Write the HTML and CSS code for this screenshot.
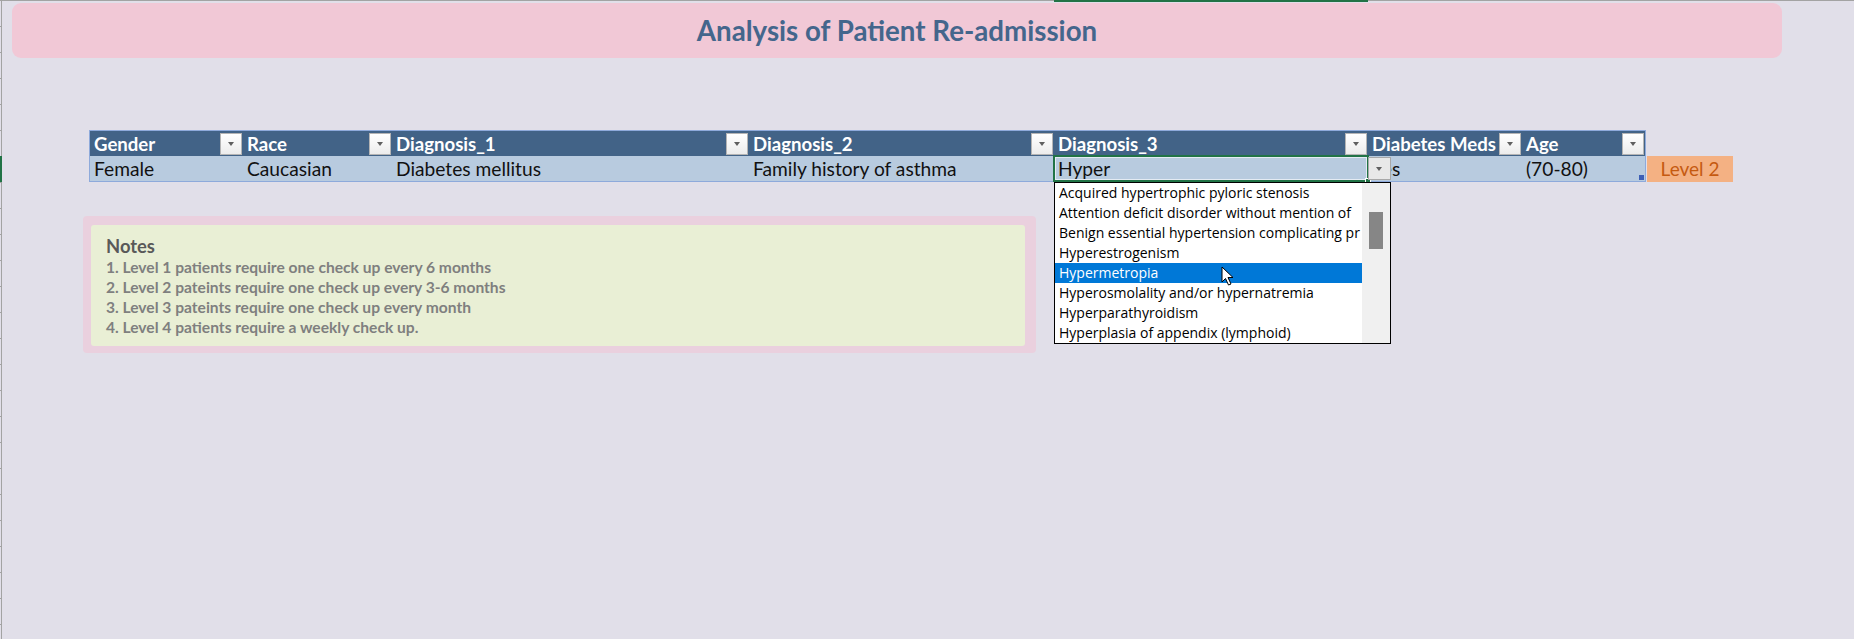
FILE: index.html
```html
<!DOCTYPE html>
<html>
<head>
<meta charset="utf-8">
<link rel="stylesheet" href="styles.css">
</head>
<body>
<div class="sheet">
  <div class="gutter"><span class="row-mark"></span></div>
  <span class="col-mark"></span>
  <div class="main">
    <header class="banner"><h1 class="title">Analysis of Patient Re-admission</h1></header>

    <div class="table-line">
      <div class="tbl">
        <div class="thead">
          <div class="th"><span>Gender</span><i class="fbtn"></i></div>
          <div class="th"><span>Race</span><i class="fbtn"></i></div>
          <div class="th"><span>Diagnosis_1</span><i class="fbtn"></i></div>
          <div class="th"><span>Diagnosis_2</span><i class="fbtn"></i></div>
          <div class="th"><span>Diagnosis_3</span><i class="fbtn"></i></div>
          <div class="th"><span>Diabetes Meds</span><i class="fbtn"></i></div>
          <div class="th"><span>Age</span><i class="fbtn"></i></div>
        </div>
        <div class="trow">
          <div class="td">Female</div>
          <div class="td">Caucasian</div>
          <div class="td">Diabetes mellitus</div>
          <div class="td">Family history of asthma</div>
          <div class="td active">Hyper
            <span class="fill-handle"></span>
            <i class="dv-btn"></i>
            <div class="dropdown">
              <ul class="options">
                <li>Acquired hypertrophic pyloric stenosis</li>
                <li>Attention deficit disorder without mention of</li>
                <li>Benign essential hypertension complicating pr</li>
                <li>Hyperestrogenism</li>
                <li class="selected">Hypermetropia</li>
                <li>Hyperosmolality and/or hypernatremia</li>
                <li>Hyperparathyroidism</li>
                <li>Hyperplasia of appendix (lymphoid)</li>
              </ul>
              <div class="scrollbar"><span class="thumb"></span></div>
              <svg class="cursor" width="14" height="21" viewBox="0 0 14 21"><path d="M1 1 L1 16 L4.5 12.5 L7.5 19 L10 18 L7 11.5 L12 11.5 Z" fill="#fff" stroke="#000" stroke-width="1" stroke-linejoin="miter"/></svg>
            </div>
          </div>
          <div class="td">Yes</div>
          <div class="td last">(70-80)<span class="resize"></span></div>
        </div>
      </div>
      <div class="level">Level 2</div>
    </div>

    <section class="notes">
      <div class="notes-inner">
        <h2 class="notes-title">Notes</h2>
        <p>1. Level 1 patients require one check up every 6 months</p>
        <p>2. Level 2 pateints require one check up every 3-6 months</p>
        <p>3. Level 3 pateints require one check up every month</p>
        <p>4. Level 4 patients require a weekly check up.</p>
      </div>
    </section>
  </div>
</div>
</body>
</html>
```

FILE: styles.css
```css
* { box-sizing: border-box; }
html, body { margin: 0; padding: 0; }
body {
  width: 1854px;
  height: 639px;
  overflow: hidden;
  background: #e1dfe9;
  font-family: Lato, "Liberation Sans", sans-serif;
}
.sheet {
  position: relative;
  display: flex;
  height: 639px;
  border-top: 1px solid #a3a3a3;
}
.gutter {
  position: relative;
  width: 2px;
  flex: none;
  border-right: 1px solid #a3a3a3;
  background: repeating-linear-gradient(to bottom, transparent 0 25px, #a3a3a3 25px 26px);
}
.row-mark {
  position: absolute;
  left: 0;
  top: 155px;
  width: 2px;
  height: 26px;
  background: #217346;
}
.col-mark {
  position: absolute;
  left: 1054px;
  top: -1px;
  width: 314px;
  height: 2px;
  background: #217346;
}
.main {
  flex: 1;
  padding-left: 10px;
}
.banner {
  margin-top: 2px;
  width: 1770px;
  height: 55px;
  border-radius: 9px;
  background: #f1c8d6;
  display: flex;
  align-items: center;
  justify-content: center;
}
.title {
  margin: 0;
  font-size: 27.7px;
  font-weight: 700;
  color: #44668c;
  line-height: 32px;
  padding-top: 1px;
}
.table-line {
  margin-top: 72px;
  margin-left: 77px;
  display: flex;
  align-items: flex-end;
}
.tbl {
  width: 1557px;
  border: 1px solid #8eaadb;
}
.thead, .trow {
  display: grid;
  grid-template-columns: 153px 149px 357px 305px 314px 154px 123px;
}
.thead { background: #426387; height: 25px; }
.trow { background: #b8cbdf; height: 25px; }
.th {
  display: flex;
  align-items: center;
  justify-content: space-between;
  padding-left: 4px;
  padding-right: 1px;
  color: #fff;
  font-weight: 700;
  font-size: 18.6px;
  line-height: 25px;
  white-space: nowrap;
  overflow: hidden;
}
.th span { padding-top: 1px; }
.fbtn {
  position: relative;
  flex: none;
  width: 22px;
  height: 22px;
  border: 1px solid #b4b4b4;
  background: linear-gradient(#ffffff, #ececec);
}
.fbtn::after {
  content: "";
  position: absolute;
  left: 7px;
  top: 8px;
  border-left: 3.5px solid transparent;
  border-right: 3.5px solid transparent;
  border-top: 4px solid #5f5f5f;
}
.td {
  position: relative;
  padding-left: 4px;
  padding-top: 1px;
  font-size: 19.2px;
  line-height: 24px;
  color: #111;
  white-space: nowrap;
}
.td.active {
  outline: 2px solid #217346;
  outline-offset: -1px;
  box-shadow: inset 0 0 0 2px #e4ebf3;
  z-index: 2;
}
.fill-handle {
  position: absolute;
  right: -3px;
  bottom: -3px;
  width: 6px;
  height: 6px;
  background: #217346;
  border: 1px solid #fff;
}
.dv-btn {
  position: absolute;
  left: 100%;
  top: 1px;
  width: 23px;
  height: 23px;
  background: #e8e8e8;
  border: 1px solid #a8a8a8;
}
.dv-btn::after {
  content: "";
  position: absolute;
  left: 7px;
  top: 9px;
  border-left: 3.5px solid transparent;
  border-right: 3.5px solid transparent;
  border-top: 4px solid #5f5f5f;
}
.dropdown {
  position: absolute;
  left: 0;
  top: 26px;
  width: 337px;
  height: 162px;
  border: 1px solid #000;
  background: #fff;
  display: flex;
}
.options {
  list-style: none;
  margin: 0;
  padding: 0;
  width: 307px;
  overflow: hidden;
}
.options li {
  height: 20px;
  line-height: 20px;
  padding-left: 4px;
  font-family: "Open Sans", "Noto Sans", sans-serif;
  font-size: 14px;
  color: #000;
  white-space: nowrap;
  overflow: hidden;
}
.options li.selected {
  background: #0078d7;
  color: #fff;
}
.scrollbar {
  flex: 1;
  background: #f0f0f0;
  padding-top: 29px;
  padding-left: 7px;
}
.thumb {
  display: block;
  width: 14px;
  height: 37px;
  background: #868686;
}
.cursor {
  position: absolute;
  left: 166px;
  top: 83px;
}
.resize {
  position: absolute;
  right: 1px;
  bottom: 1px;
  width: 5px;
  height: 5px;
  background: #3d5fb5;
}
.level {
  width: 86px;
  height: 26px;
  margin-left: 1px;
  background: #f4b183;
  color: #c55a11;
  font-size: 19px;
  line-height: 26px;
  text-align: center;
}
.notes {
  margin-top: 34px;
  margin-left: 71px;
  width: 953px;
  height: 137px;
  padding: 9px 11px 7px 8px;
  border-radius: 4px;
  background: #ead0de;
}
.notes-inner {
  height: 100%;
  border-radius: 3px;
  background: #e9efd5;
  padding: 11px 15px 0;
}
.notes-title {
  margin: 0 0 1px;
  font-size: 18.4px;
  font-weight: 700;
  line-height: 20px;
  color: #595959;
}
.notes-inner p {
  margin: 0;
  font-size: 15.6px;
  font-weight: 700;
  line-height: 20px;
  color: #7f7f7f;
}
```
